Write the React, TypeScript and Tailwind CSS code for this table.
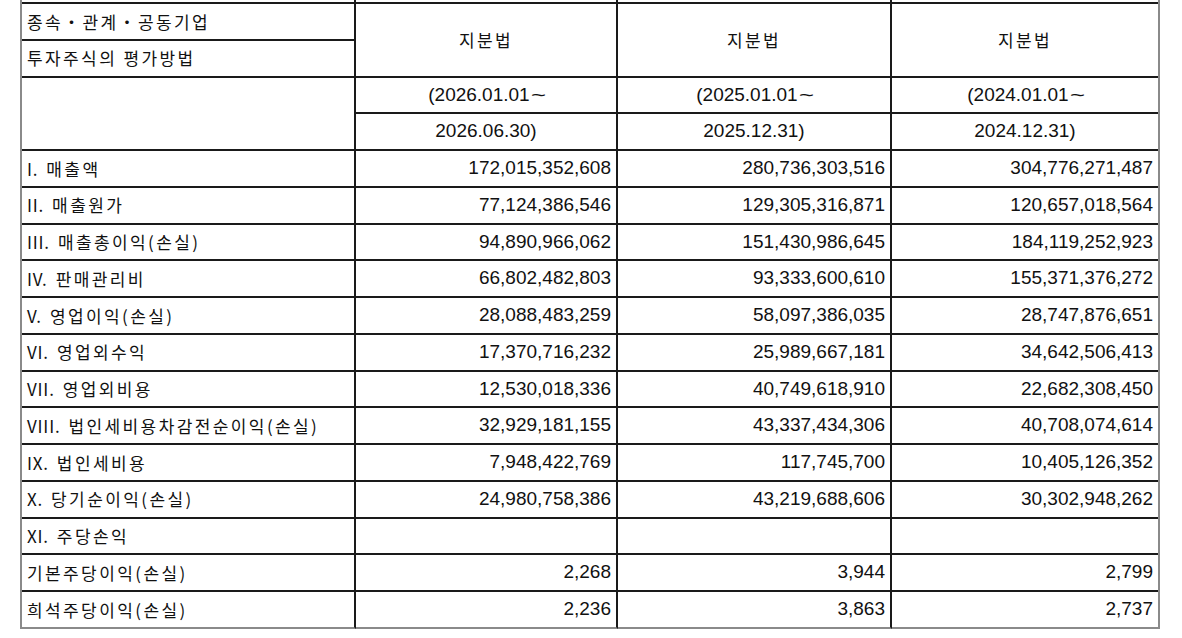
const periods = [
  { from: "(2026.01.01", to: "2026.06.30)" },
  { from: "(2025.01.01", to: "2025.12.31)" },
  { from: "(2024.01.01", to: "2024.12.31)" },
];

// [numeral, label, 2026 반기, 2025, 2024]
const rows: [string, string, string, string, string][] = [
  ["I.", "매출액", "172,015,352,608", "280,736,303,516", "304,776,271,487"],
  ["II.", "매출원가", "77,124,386,546", "129,305,316,871", "120,657,018,564"],
  ["III.", "매출총이익(손실)", "94,890,966,062", "151,430,986,645", "184,119,252,923"],
  ["IV.", "판매관리비", "66,802,482,803", "93,333,600,610", "155,371,376,272"],
  ["V.", "영업이익(손실)", "28,088,483,259", "58,097,386,035", "28,747,876,651"],
  ["VI.", "영업외수익", "17,370,716,232", "25,989,667,181", "34,642,506,413"],
  ["VII.", "영업외비용", "12,530,018,336", "40,749,618,910", "22,682,308,450"],
  ["VIII.", "법인세비용차감전순이익(손실)", "32,929,181,155", "43,337,434,306", "40,708,074,614"],
  ["IX.", "법인세비용", "7,948,422,769", "117,745,700", "10,405,126,352"],
  ["X.", "당기순이익(손실)", "24,980,758,386", "43,219,688,606", "30,302,948,262"],
  ["XI.", "주당손익", "", "", ""],
  ["", "기본주당이익(손실)", "2,268", "3,944", "2,799"],
  ["", "희석주당이익(손실)", "2,236", "3,863", "2,737"],
];

const ko = "font-['Noto_Sans_CJK_KR','Noto_Sans',sans-serif] text-[17px] tracking-[2.4px]";
const num = "font-['Liberation_Sans',Arial,sans-serif] text-[19px]";

export default function App() {
  return (
    <div className="bg-white w-[1182px] h-[638px] overflow-hidden text-[#111]">
      <div className="ml-[20px] w-[1140px] border-x-2 border-[#8a8a8a]">
        <div className="grid grid-cols-[334px_262px_274px_266px] grid-rows-[4px_repeat(17,36.76px)]">
          {/* clipped row above */}
          <div className="border-r-2 border-b-2 border-[#1a1a1a]" />
          <div className="border-r-2 border-b-2 border-[#1a1a1a]" />
          <div className="border-r-2 border-b-2 border-[#1a1a1a]" />
          <div className="border-b-2 border-[#1a1a1a]" />

          {/* header */}
          <div className={`${ko} flex items-center pl-[5px] border-r-2 border-b-2 border-[#1a1a1a]`}>
            종속・관계・공동기업
          </div>
          {periods.map((_, i) => (
            <div
              key={"m" + i}
              className={`${ko} row-span-2 flex items-center justify-center border-b-2 border-[#1a1a1a] ${i < 2 ? "border-r-2" : ""}`}
            >
              지분법
            </div>
          ))}
          <div className={`${ko} flex items-center pl-[5px] border-r-2 border-b-2 border-[#1a1a1a]`}>
            투자주식의 평가방법
          </div>

          <div className="row-span-2 border-r-2 border-b-2 border-[#1a1a1a]" />
          {periods.map((p, i) => (
            <div
              key={"f" + i}
              className={`${num} flex items-center justify-center border-b-2 border-[#1a1a1a] ${i < 2 ? "border-r-2" : ""}`}
            >
              {p.from}
              <span className="inline-block scale-x-[1.35] ml-[3px]">~</span>
            </div>
          ))}
          {periods.map((p, i) => (
            <div
              key={"t" + i}
              className={`${num} flex items-center justify-center border-b-2 border-[#1a1a1a] ${i < 2 ? "border-r-2" : ""}`}
            >
              {p.to}
            </div>
          ))}

          {/* body */}
          {rows.map((r, ri) => {
            const last = ri === rows.length - 1;
            const bb = last ? "border-b-2 border-b-[#8a8a8a]" : "border-b-2 border-b-[#1a1a1a]";
            return [
              <div
                key={ri + "l"}
                className={`${ko} flex items-center pl-[5px] whitespace-nowrap border-r-2 border-r-[#1a1a1a] ${bb}`}
              >
                {r[0] && <span className="tracking-[0.8px] mr-[8px]">{r[0]}</span>}
                {r[1]}
              </div>,
              ...[2, 3, 4].map((c) => (
                <div
                  key={ri + "-" + c}
                  className={`${num} flex items-center justify-end pr-[5px] ${bb} ${c < 4 ? "border-r-2 border-r-[#1a1a1a]" : ""}`}
                >
                  {r[c]}
                </div>
              )),
            ];
          })}
        </div>
      </div>
    </div>
  );
}
